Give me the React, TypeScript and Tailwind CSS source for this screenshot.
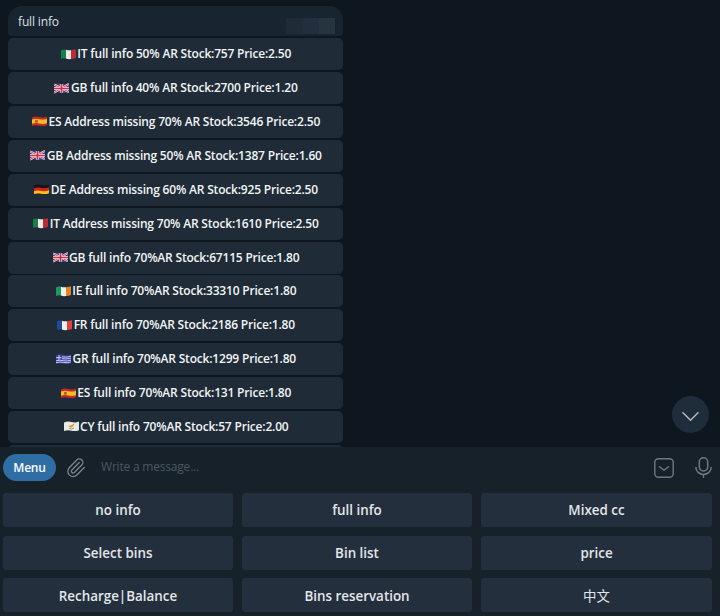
import type { ReactNode } from 'react';

type Country = 'IT' | 'GB' | 'ES' | 'DE' | 'IE' | 'FR' | 'GR' | 'CY';

interface InlineButton {
  country: Country;
  label: string;
}

const INLINE_BUTTONS: InlineButton[] = [
  { country: 'IT', label: 'IT full info 50% AR Stock:757 Price:2.50' },
  { country: 'GB', label: 'GB full info 40% AR Stock:2700 Price:1.20' },
  { country: 'ES', label: 'ES Address missing 70% AR Stock:3546 Price:2.50' },
  { country: 'GB', label: 'GB Address missing 50% AR Stock:1387 Price:1.60' },
  { country: 'DE', label: 'DE Address missing 60% AR Stock:925 Price:2.50' },
  { country: 'IT', label: 'IT Address missing 70% AR Stock:1610 Price:2.50' },
  { country: 'GB', label: 'GB full info 70%AR Stock:67115 Price:1.80' },
  { country: 'IE', label: 'IE full info 70%AR Stock:33310 Price:1.80' },
  { country: 'FR', label: 'FR full info 70%AR Stock:2186 Price:1.80' },
  { country: 'GR', label: 'GR full info 70%AR Stock:1299 Price:1.80' },
  { country: 'ES', label: 'ES full info 70%AR Stock:131 Price:1.80' },
  { country: 'CY', label: 'CY full info 70%AR Stock:57 Price:2.00' },
];

const KEYBOARD = [
  'no info',
  'full info',
  'Mixed cc',
  'Select bins',
  'Bin list',
  'price',
  'Recharge|Balance',
  'Bins reservation',
];

function Tricolor({ colors }: { colors: [string, string, string] }) {
  return (
    <>
      <path fill={colors[0]} d="M0 1.6Q2.5.2 5 .8V10.4Q2.5 9.8 0 11Z" />
      <path fill={colors[1]} d="M5 .8Q7.5 1.8 10 1.3V10.9Q7.5 11.4 5 10.4Z" />
      <path fill={colors[2]} d="M10 1.3Q12.5 1 15 .2V9.8Q12.5 11 10 10.9Z" />
    </>
  );
}

const WAVE = 'M0 1.6Q3.5 0 7.5 1.1T15 .6V10Q11.5 11.7 7.5 10.6T0 11Z';

const FLAGS: Record<Country, ReactNode> = {
  IT: <Tricolor colors={['#17804a', '#ecebea', '#bd2b35']} />,
  IE: <Tricolor colors={['#1c9a60', '#f0efec', '#e68324']} />,
  FR: <Tricolor colors={['#1b4d9b', '#efefef', '#e0413b']} />,
  GB: (
    <>
      <path fill="#30468f" d={WAVE} />
      <path stroke="#e8e3ec" strokeWidth="2.2" d="M0 1.6 15 10M15 1 0 10.5" />
      <path stroke="#d23a50" strokeWidth=".9" d="M0 1.6 15 10M15 1 0 10.5" />
      <path stroke="#f0e9ee" strokeWidth="3.2" d="M7.5 1V10.7M0 6h15" />
      <path stroke="#d42d42" strokeWidth="1.8" d="M7.5 1V10.7M0 6h15" />
    </>
  ),
  ES: (
    <>
      <path fill="#c9262c" d={WAVE} />
      <path fill="#f5bd22" d="M0 3.8Q3.5 2.4 7.5 3.5T15 3V7.8Q11.5 9.2 7.5 8.2T0 8.5Z" />
      <path fill="#b4622d" d="M3 4.3h2.8v3H3z" />
    </>
  ),
  DE: (
    <>
      <path fill="#171513" d={WAVE} />
      <path fill="#d8231c" d="M0 4.7Q3.5 3.2 7.5 4.3T15 3.6V10L0 11Z" />
      <path fill="#f6c51d" d="M0 7.9Q3.5 6.5 7.5 7.5T15 6.8V10Q11.5 11.7 7.5 10.6T0 11Z" />
    </>
  ),
  GR: (
    <>
      <path fill="#3f3fa5" d={WAVE} />
      <path
        stroke="#dedcf2"
        strokeWidth=".9"
        d="M6 3.1Q10 4 15 2.5M6 5.1Q10 6 15 4.5M0 7.4Q4 6.3 7.5 7.3T15 6.6M0 9.4Q4 8.3 7.5 9.2T15 8.5M3 1v5.5M0 4h5.5"
      />
    </>
  ),
  CY: (
    <>
      <path fill="#e9e9e6" d={WAVE} />
      <path fill="#e89a32" d="M4.2 5.8 7 4.6l3.8-2.2-1.6 3.2-2.3 1.9Z" />
      <path stroke="#6f9460" strokeWidth=".8" d="M5 8.3q2.5 1.2 5-.5" />
    </>
  ),
};

function Flag({ country }: { country: Country }) {
  return (
    <svg className="mr-[1.5px] h-[11px] w-[15px] shrink-0" viewBox="0 0 15 12" preserveAspectRatio="none" fill="none">
      {FLAGS[country]}
    </svg>
  );
}

function MessageList() {
  return (
    <div className="flex h-[447px] flex-col gap-[1.9px] overflow-hidden pt-1.5 pl-2">
      <div className="flex h-[30.3px] w-[335px] shrink-0 justify-between rounded-t-[14px] rounded-b-[3px] bg-[#182530] pr-2 pl-2.5">
        <span className="pt-[7px] text-xs leading-[17px] tracking-[-0.15px] text-[#dce1e5]">full info</span>
        {/* メッセージの時刻（モザイク） */}
        <div className="mt-3 flex h-4">
          <div className="w-4 bg-[#1f2b37]" />
          <div className="w-[17px] bg-[#222e3e]" />
          <div className="w-4 bg-[#263440]" />
        </div>
      </div>

      {INLINE_BUTTONS.map(({ country, label }) => (
        <button
          key={label}
          className="flex h-8 w-[335px] shrink-0 items-center justify-center rounded-[5px] bg-[#1f2c38] pl-px text-xs font-semibold tracking-[-0.19px] whitespace-nowrap text-[#f2f4f5]"
        >
          <Flag country={country} />
          {label}
        </button>
      ))}
      <div className="h-8 w-[335px] shrink-0 rounded-[5px] bg-[#1f2c38]" />
    </div>
  );
}

function Composer() {
  return (
    <div className="flex h-[46px] items-center pr-[8.5px] pl-[3px]">
      <button className="mb-[5px] flex h-[27px] w-[53px] items-center justify-center rounded-full bg-[#2f6ea5] text-xs font-semibold tracking-[-0.2px] text-white">
        Menu
      </button>
      {/* 添付 */}
      <svg
        className="mb-1 ml-[11px] h-5 w-[18px]"
        viewBox="2 1 20.5 22.5"
        preserveAspectRatio="none"
        fill="none"
        stroke="#7b868f"
        strokeWidth="1.5"
        strokeLinecap="round"
      >
        <path d="m16 6-8.414 8.586a2 2 0 0 0 2.829 2.829l8.414-8.586a4 4 0 1 0-5.657-5.657l-8.379 8.551a6 6 0 1 0 8.485 8.485l8.379-8.551" />
      </svg>
      <span className="mb-[7px] ml-4 text-xs tracking-[-0.2px] text-[#4c5761]">Write a message...</span>
      <svg
        className="mb-[5px] ml-auto size-5"
        viewBox="0 0 20 20"
        fill="none"
        stroke="#6d7982"
        strokeWidth="1.4"
        strokeLinecap="round"
        strokeLinejoin="round"
      >
        <rect x=".8" y=".8" width="18.4" height="18.4" rx="3.5" />
        <path d="m5.5 8.8 4.5 3.4 4.5-3.4" />
      </svg>
      {/* 音声入力 */}
      <svg
        className="mb-[5px] ml-[21px] h-[21px] w-[17px]"
        viewBox="0 0 17 21"
        fill="none"
        stroke="#6d7982"
        strokeWidth="1.5"
        strokeLinecap="round"
      >
        <rect x="4.3" y=".8" width="8.4" height="13.2" rx="4.2" />
        <path d="M.9 10.5a7.6 6.9 0 0 0 15.2 0M8.5 17.4v2.8" />
      </svg>
    </div>
  );
}

const KEY_CLASS =
  'flex h-[34px] items-center justify-center rounded-[3px] bg-[#242f3d] pt-px text-[13.4px] text-[#e2e6e9]';

export default function App() {
  return (
    <div className="relative h-[616px] w-[720px] overflow-hidden bg-[#0e1620] font-['Open_Sans','Noto_Sans_CJK_SC',sans-serif]">
      <MessageList />

      {/* 最下部へ移動 */}
      <button className="absolute top-[396px] left-[672px] flex size-[37px] items-center justify-center rounded-full bg-[#1f2c3b]">
        <svg
          className="mt-[3px] h-[9px] w-[17px]"
          viewBox="0 0 17 9"
          fill="none"
          stroke="#b3babf"
          strokeWidth="1.5"
          strokeLinecap="round"
        >
          <path d="m1 .8 7.5 7.4L16 .8" />
        </svg>
      </button>

      <div className="h-[169px] bg-[#17212a]">
        <Composer />
        <div className="grid grid-cols-[230px_230px_231px] gap-x-[9px] gap-y-[8.7px] pl-[3px]">
          {KEYBOARD.map((label) => (
            <button key={label} className={`${KEY_CLASS} font-semibold`}>
              {label}
            </button>
          ))}
          <button className={KEY_CLASS}>中文</button>
        </div>
      </div>
    </div>
  );
}
